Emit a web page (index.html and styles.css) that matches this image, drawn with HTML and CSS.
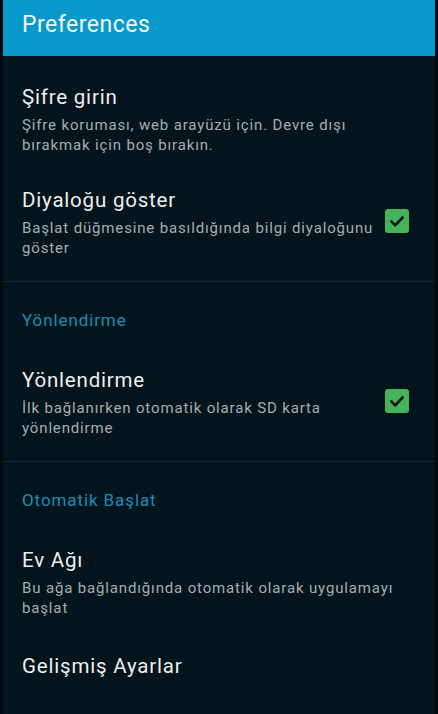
FILE: index.html
```html
<!DOCTYPE html>
<html>
    <head>
        <link rel="stylesheet" href="styles.css">
    </head>
    <body>
        <div class="screen">
            <div class="appbar">Preferences</div>
            <div class="list">
                <div class="group">
                    <div class="pref">
                        <div class="text">
                            <div class="title">Şifre girin</div>
                            <div class="summary">Şifre koruması, web arayüzü için. Devre dışı bırakmak için boş bırakın.</div>
                        </div>
                    </div>
                    <div class="pref">
                        <div class="text">
                            <div class="title">Diyaloğu göster</div>
                            <div class="summary">Başlat düğmesine basıldığında bilgi diyaloğunu göster</div>
                        </div>
                        <div class="check">
                            <svg width="24" height="24" viewBox="0 0 24 24"><path d="M6.3 12.4l3.9 3.9 7.4-7.8" fill="none" stroke="#0a1712" stroke-width="2.6" stroke-linecap="round" stroke-linejoin="round"/></svg>
                        </div>
                    </div>
                </div>
                <div class="group">
                    <div class="category">Yönlendirme</div>
                    <div class="pref">
                        <div class="text">
                            <div class="title">Yönlendirme</div>
                            <div class="summary">İlk bağlanırken otomatik olarak SD karta yönlendirme</div>
                        </div>
                        <div class="check">
                            <svg width="24" height="24" viewBox="0 0 24 24"><path d="M6.3 12.4l3.9 3.9 7.4-7.8" fill="none" stroke="#0a1712" stroke-width="2.6" stroke-linecap="round" stroke-linejoin="round"/></svg>
                        </div>
                    </div>
                </div>
                <div class="group last">
                    <div class="category">Otomatik Başlat</div>
                    <div class="pref">
                        <div class="text">
                            <div class="title">Ev Ağı</div>
                            <div class="summary">Bu ağa bağlandığında otomatik olarak uygulamayı başlat</div>
                        </div>
                    </div>
                    <div class="pref single">
                        <div class="text">
                            <div class="title">Gelişmiş Ayarlar</div>
                        </div>
                    </div>
                </div>
            </div>
        </div>
    </body>
</html>
```

FILE: styles.css
```css
html, body {
    margin: 0;
    height: 100%;
    background-color: #03080a;
}
body {
    font-family: Roboto, "Noto Sans", sans-serif;
}
.screen {
    margin: 0 3px;
    height: 714px;
    overflow: hidden;
    background-color: #03141c;
}
.appbar {
    height: 56px;
    line-height: 50px;
    padding-left: 19px;
    background-color: #0899cb;
    color: #eef6fa;
    font-size: 23px;
    letter-spacing: 0.5px;
}
.list {
    padding-top: 12px;
}
.group {
    padding-bottom: 7px;
    border-bottom: 1px solid #0f2830;
}
.group.last {
    border-bottom: none;
}
.pref {
    display: flex;
    align-items: center;
    padding: 16px 26px 16px 19px;
}
.pref.single {
    padding-top: 19px;
}
.text {
    flex: 1;
    max-width: 372px;
}
.title {
    color: #eeeeee;
    font-size: 20.5px;
    line-height: 26px;
    letter-spacing: 0.8px;
}
.summary {
    margin-top: 6px;
    color: #a6adb0;
    font-size: 15px;
    line-height: 19.5px;
    letter-spacing: 0.85px;
}
.category {
    padding: 28px 19px 21px;
    color: #1c8db4;
    font-size: 17px;
    line-height: 20px;
    letter-spacing: 0.9px;
}
.check {
    width: 24px;
    height: 24px;
    margin-left: auto;
    margin-top: -4px;
    border-radius: 3px;
    background-color: #45b35a;
}
.check svg {
    display: block;
}
```
